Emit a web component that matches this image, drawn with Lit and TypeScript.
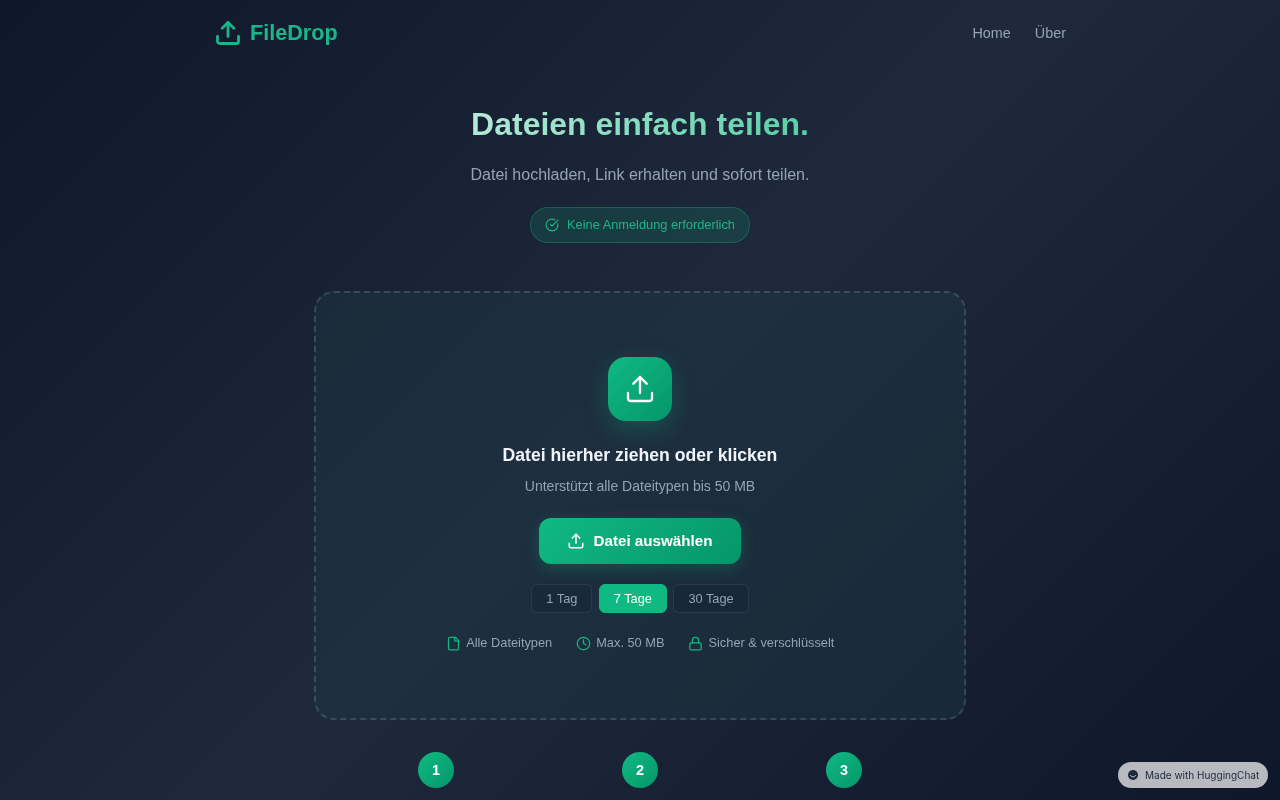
import { LitElement, html, css, svg } from "lit";
import { customElement } from "lit/decorators.js";

const uploadIcon = (size: number, sw: number) => html`<svg width=${size} height=${size} viewBox="0 0 24 24" fill="none" stroke="currentColor" stroke-width=${sw} stroke-linecap="round" stroke-linejoin="round"><path d="M12 15V3"/><path d="m7 8 5-5 5 5"/><path d="M21 15v4a2 2 0 0 1-2 2H5a2 2 0 0 1-2-2v-4"/></svg>`;
const small = (content: unknown, size = 14) => html`<svg width=${size} height=${size} viewBox="0 0 24 24" fill="none" stroke="currentColor" stroke-width="2" stroke-linecap="round" stroke-linejoin="round">${content}</svg>`;

@customElement("app-root")
export class AppRoot extends LitElement {
  static styles = css`
    :host {
      display: block;
      height: 800px;
      overflow: hidden;
      font-family: "Liberation Sans", Arial, sans-serif;
      background: linear-gradient(135deg, #0f172a 0%, #1e293b 50%, #0f172a 100%);
      color: #f1f5f9;
    }
    .page {
      will-change: transform;
    }
    nav {
      width: 852px;
      margin: 0 auto;
      height: 66px;
      display: flex;
      align-items: center;
      justify-content: space-between;
    }
    .logo {
      display: flex;
      align-items: center;
      gap: 8px;
      color: #1ab68a;
      font-size: 21.6px;
      font-weight: 700;
    }
    .links {
      display: flex;
      gap: 24px;
      font-size: 14.4px;
      color: #94a3b8;
    }
    header {
      width: 852px;
      margin: 0 auto;
      display: flex;
      flex-direction: column;
      align-items: center;
    }
    h1 {
      margin: 36px 0 0;
      width: 100%;
      text-align: center;
      font-size: 32px;
      line-height: 44px;
      font-weight: 700;
      background: linear-gradient(135deg, #ffffff, #10b981);
      -webkit-background-clip: text;
      background-clip: text;
      color: transparent;
    }
    .sub {
      margin: 17px 0 0;
      font-size: 16px;
      line-height: 24px;
      color: #94a3b8;
    }
    .pill {
      margin-top: 20px;
      height: 36px;
      box-sizing: border-box;
      padding: 0 14px;
      display: inline-flex;
      align-items: center;
      gap: 8px;
      border-radius: 18px;
      border: 1px solid rgba(16, 185, 129, 0.3);
      background: rgba(16, 185, 129, 0.15);
      color: #1ab68a;
      font-size: 12.8px;
    }
    .pill span,
    .btn span {
      padding-bottom: 1px;
    }
    .drop {
      box-sizing: border-box;
      width: 652px;
      height: 429px;
      margin: 48px auto 0;
      padding-top: 64px;
      border: 2px dashed rgba(148, 163, 184, 0.25);
      border-radius: 20px;
      background: rgba(30, 58, 70, 0.4);
      display: flex;
      flex-direction: column;
      align-items: center;
    }
    .tile {
      width: 64px;
      height: 64px;
      border-radius: 18px;
      background: linear-gradient(135deg, #10b981, #059669);
      box-shadow: 0 8px 24px rgba(16, 185, 129, 0.25);
      display: flex;
      align-items: center;
      justify-content: center;
      color: #fff;
    }
    h2 {
      margin: 22px 0 0;
      font-size: 17.6px;
      line-height: 24px;
      font-weight: 700;
      color: #f1f5f9;
    }
    .hint {
      margin: 8px 0 0;
      font-size: 14px;
      line-height: 22px;
      color: #94a3b8;
    }
    .btn {
      margin-top: 21px;
      width: 202px;
      height: 46px;
      border: 0;
      border-radius: 12px;
      background: linear-gradient(135deg, #10b981, #059669);
      box-shadow: 0 4px 16px rgba(16, 185, 129, 0.25);
      color: #fff;
      font-family: inherit;
      font-size: 15.2px;
      font-weight: 700;
      display: flex;
      align-items: center;
      justify-content: center;
      gap: 8px;
    }
    .opts {
      margin-top: 20px;
      display: flex;
      gap: 6.4px;
    }
    .opt {
      height: 29px;
      box-sizing: border-box;
      padding: 0 14px;
      display: flex;
      align-items: center;
      border-radius: 6px;
      border: 1px solid rgba(148, 163, 184, 0.15);
      background: rgba(15, 23, 42, 0.2);
      color: #94a3b8;
      font-size: 12.8px;
    }
    .opt.on {
      background: #10b981;
      border-color: #10b981;
      color: #fff;
    }
    .feats {
      margin-top: 20px;
      display: flex;
      gap: 23.5px;
      font-size: 12.8px;
      color: #94a3b8;
    }
    .feat {
      display: flex;
      align-items: center;
      gap: 5.5px;
    }
    .feat svg {
      color: #10b981;
      margin-top: 3px;
    }
    .steps {
      display: grid;
      grid-template-columns: repeat(3, 204px);
      justify-content: center;
      margin-top: 32px;
    }
    .step {
      display: flex;
      justify-content: center;
    }
    .num {
      width: 36px;
      height: 36px;
      border-radius: 50%;
      background: linear-gradient(135deg, #10b981, #059669);
      color: #fff;
      font-size: 14.4px;
      font-weight: 700;
      display: flex;
      align-items: center;
      justify-content: center;
    }
    .made {
      position: fixed;
      right: 12px;
      bottom: 12px;
      width: 150px;
      height: 26px;
      box-sizing: border-box;
      padding-left: 10px;
      display: flex;
      align-items: center;
      gap: 7px;
      border-radius: 13px;
      background: rgba(255, 255, 255, 0.7);
      color: #1e293b;
      font-family: "Inter", sans-serif;
      font-size: 10px;
      white-space: nowrap;
    }
  `;

  render() {
    return html`
      <div class="page">
      <nav>
        <div class="logo">${uploadIcon(28, 2.4)}<span>FileDrop</span></div>
        <div class="links"><span>Home</span><span>Über</span></div>
      </nav>
      <header>
        <h1>Dateien einfach teilen.</h1>
        <p class="sub">Datei hochladen, Link erhalten und sofort teilen.</p>
        <div class="pill">
          ${small(svg`<path d="M21.8 10A10 10 0 1 1 17 3.3"/><path d="m9 11 3 3L22 4"/>`)}
          <span>Keine Anmeldung erforderlich</span>
        </div>
      </header>
      <section class="drop">
        <div class="tile">${uploadIcon(32, 1.75)}</div>
        <h2>Datei hierher ziehen oder klicken</h2>
        <p class="hint">Unterstützt alle Dateitypen bis 50 MB</p>
        <button class="btn">${uploadIcon(18, 2)}<span>Datei auswählen</span></button>
        <div class="opts">
          <div class="opt">1 Tag</div>
          <div class="opt on">7 Tage</div>
          <div class="opt">30 Tage</div>
        </div>
        <div class="feats">
          <div class="feat">${small(svg`<path d="M15 2H6a2 2 0 0 0-2 2v16a2 2 0 0 0 2 2h12a2 2 0 0 0 2-2V7z"/><path d="M14 2v5a1 1 0 0 0 1 1h5"/>`, 15)}<span>Alle Dateitypen</span></div>
          <div class="feat">${small(svg`<circle cx="12" cy="12" r="10"/><path d="M12 6v6l4 2"/>`, 15)}<span>Max. 50 MB</span></div>
          <div class="feat">${small(svg`<rect x="3" y="11" width="18" height="11" rx="2"/><path d="M7 11V7a5 5 0 0 1 10 0v4"/>`, 15)}<span>Sicher &amp; verschlüsselt</span></div>
        </div>
      </section>
      <div class="steps">
        <div class="step"><div class="num">1</div></div>
        <div class="step"><div class="num">2</div></div>
        <div class="step"><div class="num">3</div></div>
      </div>
      </div>
      <div class="made">
        <svg width="10" height="10" viewBox="0 0 12 12"><circle cx="6" cy="6" r="6" fill="#1e293b"/><path d="M2.8 6c.8 3 5.6 3 6.4 0" stroke="#c3c8d2" stroke-width="1.2" fill="none"/></svg>
        <span>Made with HuggingChat</span>
      </div>
    `;
  }
}
